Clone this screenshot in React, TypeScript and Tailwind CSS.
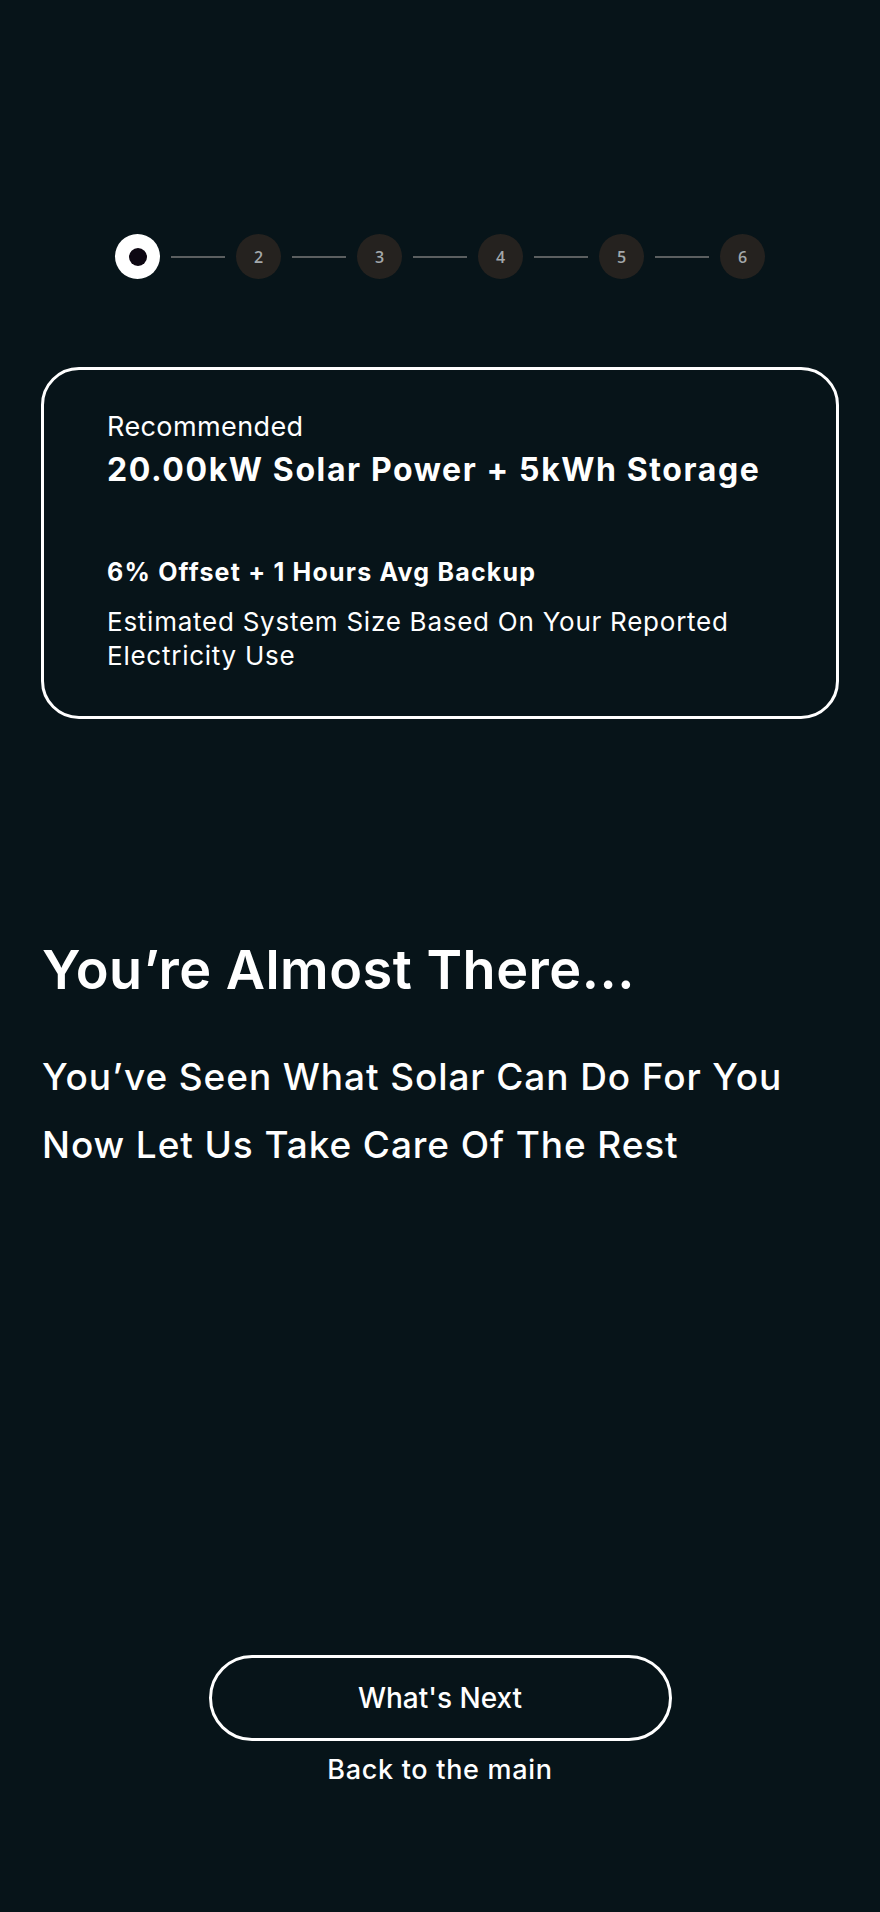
import React from 'react'

const steps = [1, 2, 3, 4, 5, 6]

function Stepper() {
  return (
    <div className="flex items-center justify-center">
      {steps.map((n, i) => (
        <div key={n} className="flex items-center">
          {i > 0 && <div className="mx-[11px] h-[2px] w-[54px] bg-[#5b5f60]" />}
          {n === 1 ? (
            <div className="flex h-[45px] w-[45px] items-center justify-center rounded-full bg-white">
              <div className="h-[18px] w-[18px] rounded-full bg-[#0d0712]" />
            </div>
          ) : (
            <div className="flex h-[45px] w-[45px] items-center justify-center rounded-full bg-[#25221f] font-['Open_Sans',sans-serif] text-[16px] font-semibold text-[#a3a8ab]">
              {n}
            </div>
          )}
        </div>
      ))}
    </div>
  )
}

export default function App() {
  return (
    <div className="min-h-screen bg-[#071419] font-['Inter',sans-serif] text-white">
      <div className="pt-[234px]">
        <Stepper />
      </div>

      <div className="mx-[41px] mt-[88px] rounded-[38px] border-[3px] border-white pb-[43px] pl-[63px] pr-[30px] pt-[41px]">
        <p className="text-[27px] leading-[32px] font-normal tracking-[0.4px]">Recommended</p>
        <h2 className="mt-[10px] text-[32px] leading-[34px] font-bold tracking-[1.6px]">20.00kW Solar Power + 5kWh Storage</h2>
        <p className="mt-[69px] text-[25px] leading-[32px] font-bold tracking-[1.2px]">6% Offset + 1 Hours Avg Backup</p>
        <p className="mt-[17px] max-w-[650px] text-[26px] leading-[34px] font-normal tracking-[0.75px]">
          Estimated System Size Based On Your Reported Electricity Use
        </p>
      </div>

      <div className="mt-[219px] px-[42px]">
        <h1 className="text-[54px] leading-[64px] font-semibold tracking-[0.5px]">You’re Almost There...</h1>
        <div className="mt-[41px] text-[37px] leading-[68px] font-medium tracking-[0.9px]">
          <p>You’ve Seen What Solar Can Do For You</p>
          <p>Now Let Us Take Care Of The Rest</p>
        </div>
      </div>

      <div className="mt-[476px] flex flex-col items-center pb-[126px]">
        <button className="flex h-[86px] w-[463px] items-center justify-center rounded-full border-[3px] border-white text-[28px] font-medium text-white">
          What's Next
        </button>
        <a className="mt-[13px] text-[27px] leading-[32px] font-medium tracking-[0.7px] text-white">Back to the main</a>
      </div>
    </div>
  )
}
